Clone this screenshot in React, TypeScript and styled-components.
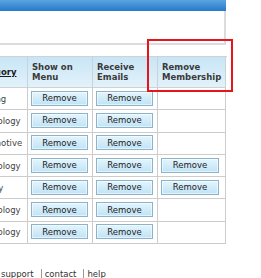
import React from "react";
import styled, { createGlobalStyle } from "styled-components";

const GlobalStyle = createGlobalStyle`
  html, body {
    margin: 0;
    padding: 0;
    background: #ffffff;
  }
  body {
    font-family: "DejaVu Sans", Verdana, sans-serif;
  }
`;

const Viewport = styled.div`
  position: relative;
  width: 261px;
  height: 278px;
  overflow: hidden;
  background: #fff;
`;

const Page = styled.div`
  width: 227px;
`;

const TopBar = styled.div`
  height: 11px;
  width: 226px;
  background: linear-gradient(#5aa5e0, #2479c9);
`;

const Panel = styled.div`
  height: 32px;
  width: 224px;
  background: #fff;
  border-right: 2px solid #dcdcdc;
  border-bottom: 2px solid #dcdcdc;
`;

const Grid = styled.div`
  display: grid;
  grid-template-columns: 59px 65px 65px 68px;
  grid-template-rows: 31px repeat(7, 22.3px);
  margin-top: 11px;
  margin-left: -31px;
  border-top: 1px solid #cdd4d8;
`;

const HeadCell = styled.div`
  display: flex;
  align-items: center;
  padding-left: 4px;
  background: linear-gradient(#c8e5f6, #e3f2fa);
  border-right: 1px solid #c9d3d8;
  border-bottom: 1px solid #c9d3d8;
  font-size: 8.5px;
  font-weight: bold;
  line-height: 10px;
  color: #3a3a3a;
`;

const SortLink = styled.a`
  color: #1a1a1a;
  text-decoration: underline;
`;

const Cell = styled.div<{ $pad?: number }>`
  display: flex;
  align-items: center;
  padding-left: ${(p) => p.$pad ?? 3}px;
  border-right: 1px solid #cccccc;
  border-bottom: 1px solid #cccccc;
  font-size: 8.5px;
  color: #444;
  white-space: nowrap;
  overflow: hidden;
`;

const RemoveButton = styled.button<{ $wide?: boolean }>`
  width: ${(p) => (p.$wide ? 58 : 57)}px;
  height: 15px;
  margin-top: -1px;
  padding: 0;
  border: 1px solid #8db3c9;
  background: linear-gradient(#e4f5fd, #bfe3f6);
  box-shadow: inset 0 0 0 1px rgba(255, 255, 255, 0.55);
  font-family: "DejaVu Sans", Verdana, sans-serif;
  font-size: 8.5px;
  color: #222;
  line-height: 12px;
`;

const Footer = styled.div`
  display: flex;
  align-items: center;
  margin-top: 25px;
  padding-left: 1px;
  font-size: 8.5px;
  line-height: 11px;
  color: #333;
`;

const FooterLink = styled.span``;

const Sep = styled.span`
  display: inline-block;
  width: 1px;
  height: 11px;
  background: #999;
  margin: 0 3px 0 7px;
`;

const Highlight = styled.div`
  position: absolute;
  left: 147px;
  top: 39px;
  width: 82px;
  height: 49px;
  border: 2px solid #e8141b;
`;

const rows = [
  { name: "Gaming", member: false },
  { name: "Technology", member: false },
  { name: "Automotive", member: false },
  { name: "Technology", member: true },
  { name: "History", member: true },
  { name: "Technology", member: false },
  { name: "Technology", member: false },
];

export default function App() {
  return (
    <Viewport>
      <GlobalStyle />
      <Page>
        <TopBar />
        <Panel />
        <Grid>
          <HeadCell>
            <SortLink>Category</SortLink>
          </HeadCell>
          <HeadCell>
            Show on
            <br />
            Menu
          </HeadCell>
          <HeadCell>
            Receive
            <br />
            Emails
          </HeadCell>
          <HeadCell>
            Remove
            <br />
            Membership
          </HeadCell>
          {rows.map((r, i) => (
            <React.Fragment key={i}>
              <Cell $pad={4}>{r.name}</Cell>
              <Cell>
                <RemoveButton>Remove</RemoveButton>
              </Cell>
              <Cell>
                <RemoveButton>Remove</RemoveButton>
              </Cell>
              <Cell>{r.member && <RemoveButton $wide>Remove</RemoveButton>}</Cell>
            </React.Fragment>
          ))}
        </Grid>
        <Footer>
          <FooterLink>support</FooterLink>
          <Sep />
          <FooterLink>contact</FooterLink>
          <Sep />
          <FooterLink>help</FooterLink>
        </Footer>
      </Page>
      <Highlight />
    </Viewport>
  );
}
